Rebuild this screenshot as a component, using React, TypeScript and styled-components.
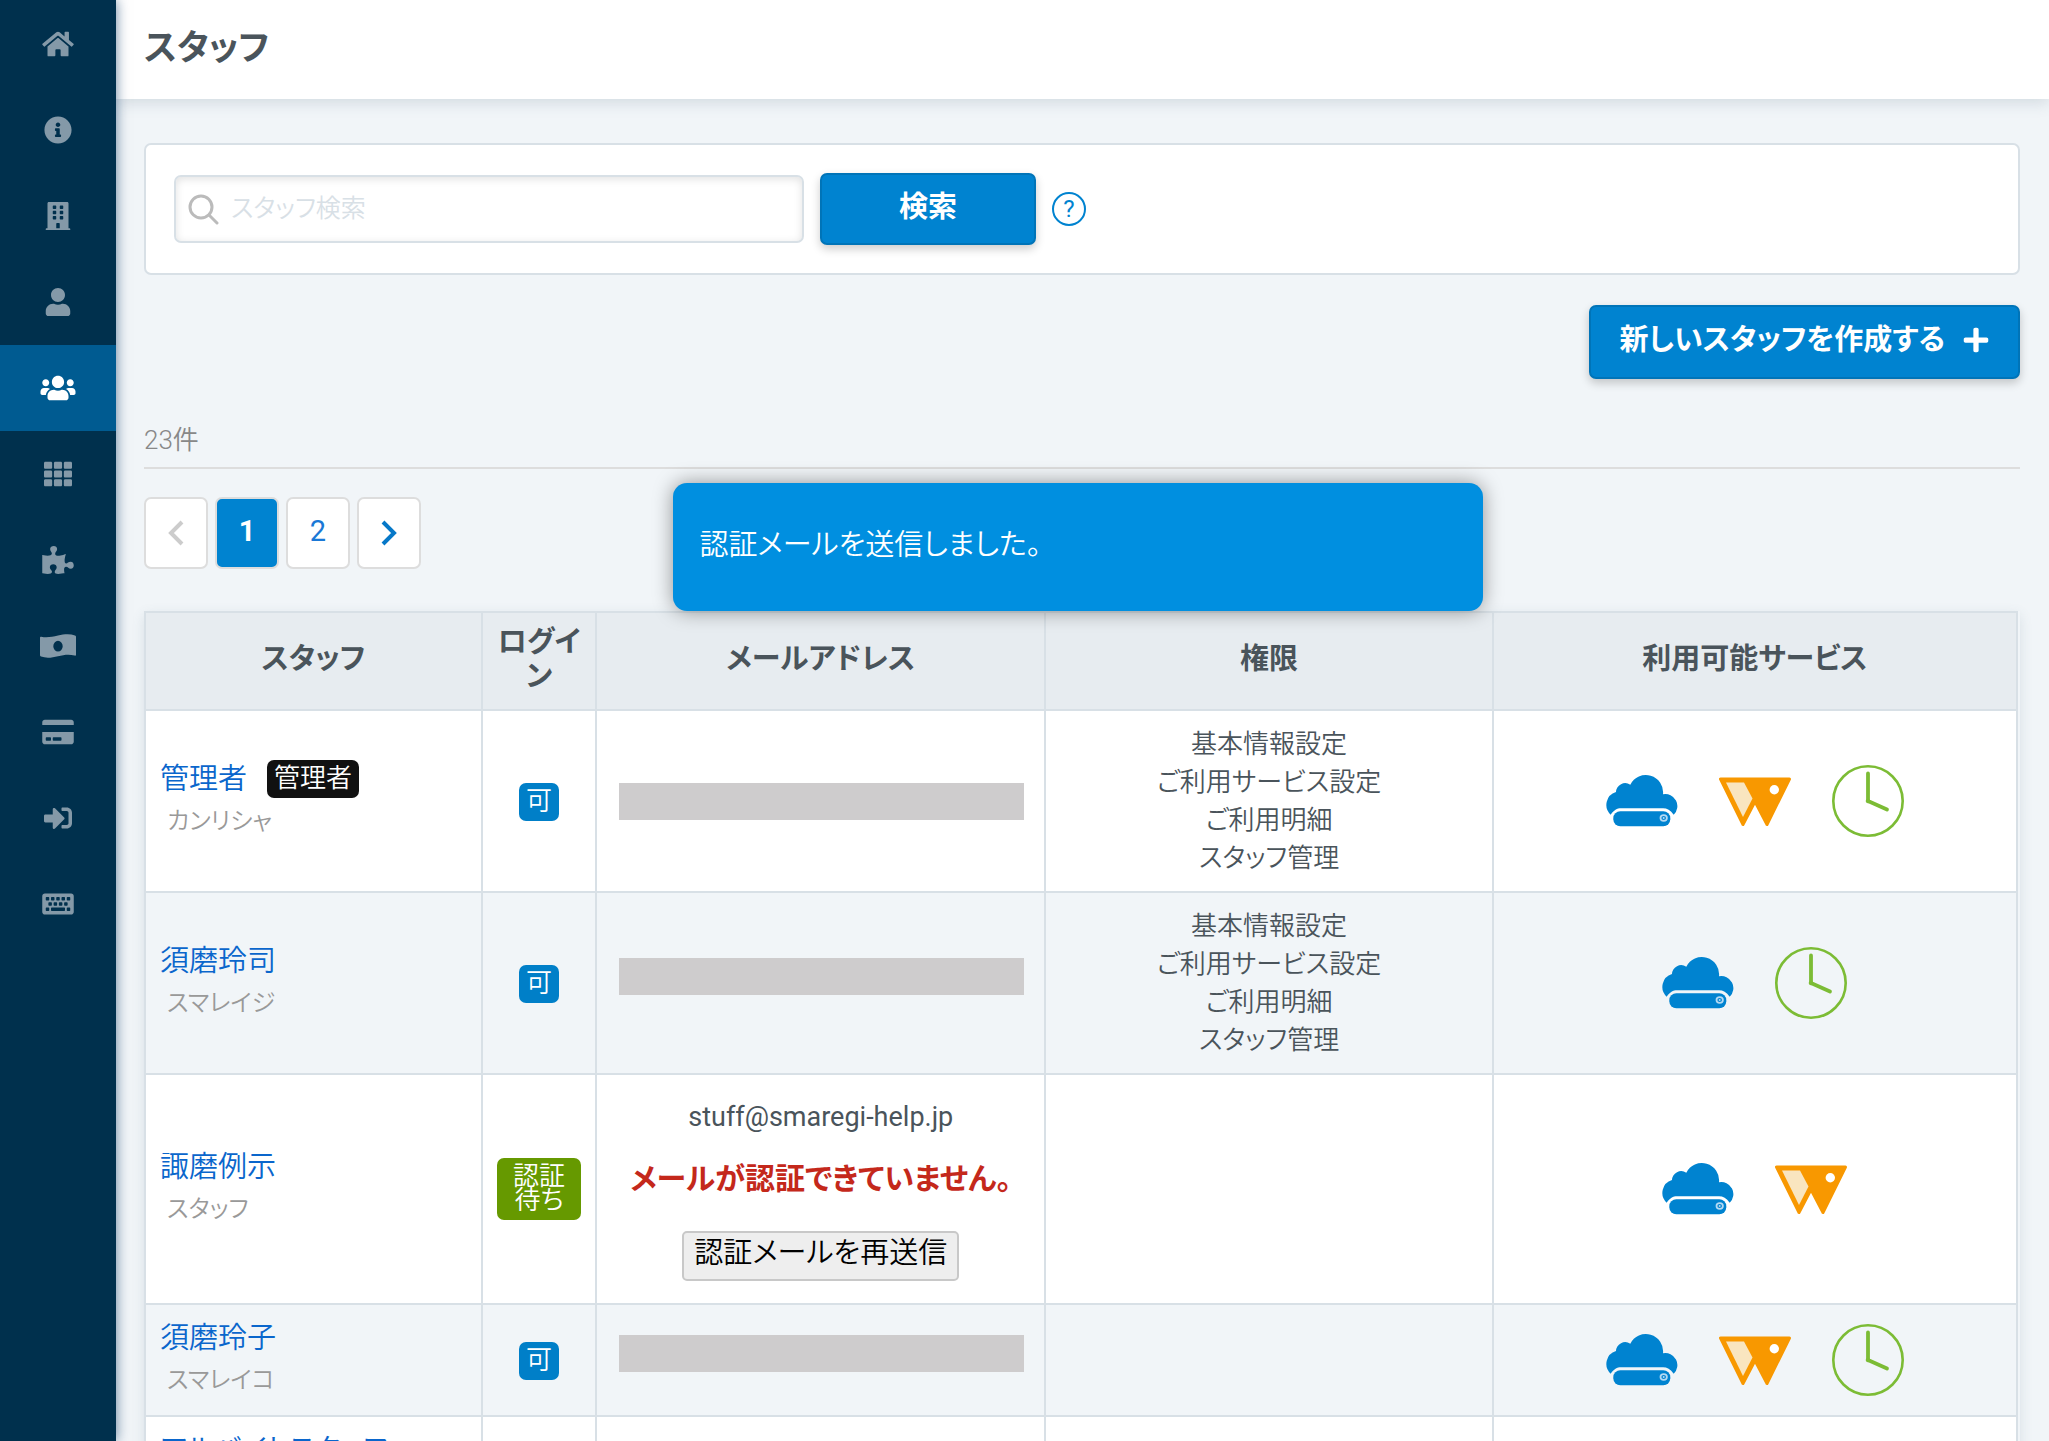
import React from "react";
import styled, { createGlobalStyle, css } from "styled-components";
import {
  FaBuilding,
  FaCreditCard,
  FaHome,
  FaInfoCircle,
  FaKeyboard,
  FaPlus,
  FaPuzzlePiece,
  FaSignInAlt,
  FaTh,
  FaUser,
  FaUsers,
} from "react-icons/fa";

const color = {
  navy: "#00304d",
  navyActive: "#005b91",
  blue: "#0083d0",
  blueDark: "#0074b8",
  link: "#0a66cc",
  text: "#4a545b",
  muted: "#999999",
  line: "#d8e0e6",
  rule: "#dddddd",
  page: "#f1f5f8",
  head: "#e7ecf0",
};

const GlobalStyle = createGlobalStyle`
  *, *::before, *::after { box-sizing: border-box; }
  body {
    margin: 0;
    background: ${color.page};
    color: ${color.text};
    font-family: Roboto, "Noto Sans CJK JP", sans-serif;
    font-size: 26px;
    line-height: 38px;
    font-feature-settings: "palt";
  }
  button, input { font: inherit; font-feature-settings: inherit; }
  h1, p { margin: 0; padding: 0; }
  a { text-decoration: none; }
`;

const Shell = styled.div`
  display: flex;
  height: 100vh;
  overflow: hidden;
`;

const Sidebar = styled.nav`
  flex: none;
  width: 116px;
  padding-top: 1px;
  background: ${color.navy};
  box-shadow: 0 0 12px rgba(0, 48, 96, 0.6);
  z-index: 2;
`;

const NavLink = styled.a<{ $active?: boolean }>`
  display: flex;
  align-items: center;
  justify-content: center;
  height: 86px;
  color: ${(p) => (p.$active ? "#ffffff" : "#8499a8")};
  background: ${(p) => (p.$active ? color.navyActive : "transparent")};

  svg {
    width: 36px;
    height: 28px;
  }
`;

const Main = styled.main`
  position: relative;
  flex: 1;
  min-width: 0;
  overflow-y: auto;
  scrollbar-width: none;
`;

const Header = styled.header`
  height: 99px;
  padding: 25px 28px;
  background: #ffffff;
  box-shadow: 0 4px 14px rgba(70, 100, 120, 0.18);
`;

const Title = styled.h1`
  font-size: 35px;
  line-height: 48px;
  font-weight: 700;
`;

const Content = styled.div`
  padding: 44px 29px 0 28px;
`;

const SearchCard = styled.form`
  display: flex;
  align-items: center;
  height: 132px;
  padding: 0 28px;
  gap: 16px;
  background: #ffffff;
  border: 2px solid ${color.line};
  border-radius: 7px;
`;

const SearchBox = styled.label`
  display: flex;
  align-items: center;
  gap: 12px;
  width: 630px;
  height: 68px;
  padding: 0 12px;
  border: 2px solid ${color.line};
  border-radius: 7px;
  box-shadow: inset 0 2px 8px rgba(0, 0, 0, 0.12);
`;

const SearchInput = styled.input`
  flex: 1;
  min-width: 0;
  height: 56px;
  padding: 0 0 2px;
  border: 0;
  outline: 0;
  background: transparent;
  color: ${color.text};
  font-size: 25px;
  font-weight: 350;

  &::placeholder {
    color: ${color.line};
    opacity: 1;
  }
`;

const primary = css`
  border: 2px solid ${color.blueDark};
  border-radius: 7px;
  background: ${color.blue};
  color: #ffffff;
  font-size: 29px;
  line-height: 40px;
  font-weight: 700;
  box-shadow: 0 4px 10px rgba(0, 0, 0, 0.2);
  cursor: pointer;
`;

const SearchButton = styled.button`
  ${primary}
  width: 216px;
  height: 72px;
  padding: 0 0 4px;
`;

const HelpButton = styled.button`
  width: 34px;
  height: 34px;
  padding: 0;
  border: 2px solid ${color.blue};
  border-radius: 50%;
  background: #ffffff;
  color: ${color.blue};
  font-size: 24px;
  line-height: 28px;
`;

const Actions = styled.div`
  display: flex;
  justify-content: flex-end;
  margin-top: 30px;
`;

const CreateButton = styled.button`
  ${primary}
  display: flex;
  align-items: center;
  gap: 18px;
  height: 74px;
  padding: 0 29px 4px;

  svg {
    width: 26px;
    height: 28px;
  }
`;

const Count = styled.p`
  margin-top: 42px;
  padding-bottom: 8px;
  border-bottom: 2px solid ${color.rule};
  color: #888888;
  font-weight: 350;
`;

const Pager = styled.nav`
  display: flex;
  gap: 7px;
  margin-top: 28px;
`;

const PageButton = styled.button<{ $current?: boolean }>`
  display: flex;
  align-items: center;
  justify-content: center;
  width: 64px;
  height: 72px;
  padding: 0 0 4px;
  border: 2px solid ${color.rule};
  border-radius: 7px;
  background: ${(p) => (p.$current ? color.blue : "#ffffff")};
  color: ${(p) => (p.$current ? "#ffffff" : "#1a78d6")};
  font-size: 29px;
  font-weight: ${(p) => (p.$current ? 700 : 400)};

  svg {
    margin-top: 4px;
  }
`;

const TableFrame = styled.div`
  margin-top: 42px;
  padding-right: 2px;
  box-shadow: 0 4px 12px rgba(70, 100, 120, 0.14);
`;

const Table = styled.table`
  width: 100%;
  table-layout: fixed;
  border-collapse: collapse;
`;

const Col = styled.col<{ $width: string }>`
  width: ${(p) => p.$width};
`;

const Th = styled.th`
  height: 98px;
  padding: 0 14px 4px;
  border: 2px solid ${color.line};
  background: ${color.head};
  font-size: 29px;
  line-height: 34px;
  font-weight: 700;
  word-break: break-all;
`;

const Row = styled.tr`
  background: #ffffff;

  &:nth-child(even) {
    background: ${color.page};
  }
`;

const Td = styled.td<{ $left?: boolean }>`
  padding: 14px;
  border: 2px solid ${color.line};
  text-align: ${(p) => (p.$left ? "left" : "center")};
  font-weight: 350;
`;

const NameLine = styled.div`
  display: flex;
  align-items: center;
  gap: 20px;
  font-size: 29px;
  line-height: 38px;
`;

const StaffLink = styled.a`
  color: ${color.link};
`;

const Kana = styled.div`
  margin-top: 2px;
  padding-left: 7px;
  color: ${color.muted};
  font-size: 24px;
  line-height: 42px;
`;

const Tag = styled.span<{ $tone: "black" | "blue" | "green" }>`
  display: inline-block;
  padding: 6px 7px 8px;
  border-radius: 7px;
  background: ${(p) => ({ black: "#111111", blue: "#007fc8", green: "#669900" })[p.$tone]};
  color: #ffffff;
  font-size: 26px;
  line-height: 24px;
  vertical-align: middle;
`;

const Redacted = styled.div<{ $raised?: boolean }>`
  height: 37px;
  margin: 0 6px ${(p) => (p.$raised ? 14 : 0)}px 8px;
  background: #cecccd;
`;

const MailBlock = styled.div`
  display: flex;
  flex-direction: column;
  align-items: center;
  padding: 9px 0 8px;
  font-weight: 400;
`;

const MailAddress = styled.p`
  font-size: 27px;
`;

const MailWarning = styled.p`
  margin: 21px 0 30px;
  color: #c4281b;
  font-size: 30px;
  line-height: 44px;
  font-weight: 700;
  white-space: nowrap;
`;

const ResendButton = styled.button`
  height: 50px;
  padding: 0 10px 6px;
  border: 2px solid #c8c8c8;
  border-radius: 5px;
  background: #eeeeee;
  color: #000000;
  font-size: 29px;
  font-weight: 350;
  line-height: 40px;
  white-space: nowrap;
`;

const Services = styled.div`
  display: flex;
  justify-content: center;
  gap: 41px;
`;

const Toast = styled.div`
  position: absolute;
  top: 483px;
  left: calc(50% - 410px);
  width: 810px;
  padding: 42px 27px 46px;
  border-radius: 14px;
  background: #008fe0;
  color: #ffffff;
  font-size: 29px;
  line-height: 40px;
  font-weight: 350;
  box-shadow: 0 0 20px rgba(0, 0, 0, 0.4);
`;

const BanknoteIcon = () => (
  <svg viewBox="0 0 36 28" fill="currentColor">
    <path
      fillRule="evenodd"
      d="M1.2 4.7C6 6 12 5 18 3.600C24 2 30 1.600 35 3.400Q36 3.800 36 4.800V22.500Q36 24 34.600 23.600C29 22 24 22.800 18 24.200C12 25.800 6 26.400 1 24.600Q0 24.200 0 23.200V5.700Q0 4.400 1.200 4.700ZM18 8.800A4.700 5.400 0 1 0 18 19.600A4.700 5.400 0 1 0 18 8.800Z"
    />
  </svg>
);

const SearchIcon = () => (
  <svg width="31" height="31" viewBox="0 0 31 31" fill="none" stroke="#bbbbbb" strokeWidth="3">
    <circle cx="13" cy="13" r="11" />
    <path d="M21 21L29 29" strokeLinecap="round" />
  </svg>
);

const Chevron = ({ to, stroke }: { to: "left" | "right"; stroke: string }) => (
  <svg width="16" height="26" viewBox="0 0 16 26" fill="none" stroke={stroke} strokeWidth="4">
    <path d={to === "left" ? "M14 2L3 13L14 24" : "M2 2L13 13L2 24"} />
  </svg>
);

const CloudIcon = () => (
  <svg width="72" height="72" viewBox="0 0 72 72" role="img" aria-label="cloud">
    <path
      fill="#0083d0"
      d="M4.7 49.7A13.4 13.4 0 0 1 10 27A9.2 9.2 0 0 1 24.3 19.7A17.3 17.3 0 0 1 57 29.3A12 12 0 0 1 67.7 49.7C64.5 45.2 61 43.3 57 43.3H15C11 43.3 7.8 45.2 4.7 49.7Z"
    />
    <rect x="7.3" y="46.3" width="57" height="15" rx="7" fill="#0083d0" />
    <ellipse cx="57.7" cy="53" rx="3.2" ry="2.8" fill="none" stroke="#b3d9f3" strokeWidth="1.8" />
    <circle cx="57.7" cy="53" r="1" fill="#b3d9f3" />
  </svg>
);

const WaiterIcon = () => (
  <svg width="72" height="72" viewBox="0 0 72 72" role="img" aria-label="waiter">
    <path
      fill="#f89800"
      stroke="#f89800"
      strokeWidth="3"
      strokeLinejoin="round"
      d="M1.5 14H70.5L48 59.5L36 36.5L24 59.5Z"
    />
    <path fill="#f9e5bf" d="M7 17.5H25L33.5 33.5L24 52Z" />
    <circle cx="55.3" cy="24.7" r="4.7" fill="#ffffff" />
  </svg>
);

const ClockIcon = () => (
  <svg width="72" height="72" viewBox="0 0 72 72" fill="none" stroke="#7cbc35" role="img" aria-label="timecard">
    <circle cx="36" cy="36" r="34.7" strokeWidth="2.6" />
    <path d="M36 8.5V36L55 44.5" strokeWidth="3.8" strokeLinecap="round" strokeLinejoin="round" />
    <circle cx="36" cy="36" r="1.8" fill="#7cbc35" />
  </svg>
);

type Service = "cloud" | "waiter" | "clock";
const serviceIcon: Record<Service, React.FC> = {
  cloud: CloudIcon,
  waiter: WaiterIcon,
  clock: ClockIcon,
};

const navItems = [
  { label: "ホーム", Icon: FaHome },
  { label: "お知らせ", Icon: FaInfoCircle },
  { label: "会社", Icon: FaBuilding },
  { label: "アカウント", Icon: FaUser },
  { label: "スタッフ", Icon: FaUsers, active: true },
  { label: "サービス", Icon: FaTh },
  { label: "アプリ", Icon: FaPuzzlePiece },
  { label: "ご利用明細", Icon: BanknoteIcon },
  { label: "お支払い", Icon: FaCreditCard },
  { label: "ログイン", Icon: FaSignInAlt },
  { label: "キーボード", Icon: FaKeyboard },
];

const allPermissions = ["基本情報設定", "ご利用サービス設定", "ご利用明細", "スタッフ管理"];

interface Staff {
  name: string;
  kana?: string;
  admin?: boolean;
  login?: "ok" | "pending";
  mail?: string;
  raised?: boolean;
  permissions: string[];
  services: Service[];
}

const staff: Staff[] = [
  { name: "管理者", kana: "カンリシャ", admin: true, login: "ok", permissions: allPermissions, services: ["cloud", "waiter", "clock"] },
  { name: "須磨玲司", kana: "スマレイジ", login: "ok", raised: true, permissions: allPermissions, services: ["cloud", "clock"] },
  { name: "諏磨例示", kana: "スタッフ", login: "pending", mail: "stuff@smaregi-help.jp", permissions: [], services: ["cloud", "waiter"] },
  { name: "須磨玲子", kana: "スマレイコ", login: "ok", raised: true, permissions: [], services: ["cloud", "waiter", "clock"] },
  { name: "アルバイトスタッフ", permissions: [], services: [] },
];

const StaffRow = ({ person }: { person: Staff }) => (
  <Row>
    <Td $left>
      <NameLine>
        <StaffLink href="#staff">{person.name}</StaffLink>
        {person.admin && <Tag $tone="black">管理者</Tag>}
      </NameLine>
      {person.kana && <Kana>{person.kana}</Kana>}
    </Td>
    <Td>
      {person.login === "ok" && <Tag $tone="blue">可</Tag>}
      {person.login === "pending" && <Tag $tone="green">認証待ち</Tag>}
    </Td>
    <Td>
      {person.login === "ok" && <Redacted $raised={person.raised} />}
      {person.mail && (
        <MailBlock>
          <MailAddress>{person.mail}</MailAddress>
          <MailWarning>メールが認証できていません。</MailWarning>
          <ResendButton type="button">認証メールを再送信</ResendButton>
        </MailBlock>
      )}
    </Td>
    <Td>
      {person.permissions.map((permission) => (
        <p key={permission}>{permission}</p>
      ))}
    </Td>
    <Td>
      <Services>
        {person.services.map((service) => {
          const Icon = serviceIcon[service];
          return <Icon key={service} />;
        })}
      </Services>
    </Td>
  </Row>
);

export default function App() {
  return (
    <>
      <GlobalStyle />
      <Shell>
        <Sidebar>
          {navItems.map(({ label, Icon, active }) => (
            <NavLink key={label} href="#nav" aria-label={label} $active={active}>
              <Icon />
            </NavLink>
          ))}
        </Sidebar>
        <Main>
          <Header>
            <Title>スタッフ</Title>
          </Header>
          <Content>
            <SearchCard onSubmit={(event) => event.preventDefault()}>
              <SearchBox>
                <SearchIcon />
                <SearchInput type="text" placeholder="スタッフ検索" aria-label="スタッフ検索" />
              </SearchBox>
              <SearchButton type="submit">検索</SearchButton>
              <HelpButton type="button">?</HelpButton>
            </SearchCard>
            <Actions>
              <CreateButton type="button">
                新しいスタッフを作成する
                <FaPlus />
              </CreateButton>
            </Actions>
            <Count>23件</Count>
            <Pager>
              <PageButton type="button" disabled aria-label="前へ">
                <Chevron to="left" stroke="#cccccc" />
              </PageButton>
              <PageButton type="button" $current>
                1
              </PageButton>
              <PageButton type="button">2</PageButton>
              <PageButton type="button" aria-label="次へ">
                <Chevron to="right" stroke="#0678c8" />
              </PageButton>
            </Pager>
            <TableFrame>
              <Table>
                <colgroup>
                  <Col $width="18%" />
                  <Col $width="6.1%" />
                  <Col $width="24%" />
                  <Col $width="23.9%" />
                  <Col $width="auto" />
                </colgroup>
                <thead>
                  <tr>
                    <Th>スタッフ</Th>
                    <Th>ログイン</Th>
                    <Th>メールアドレス</Th>
                    <Th>権限</Th>
                    <Th>利用可能サービス</Th>
                  </tr>
                </thead>
                <tbody>
                  {staff.map((person) => (
                    <StaffRow key={person.name} person={person} />
                  ))}
                </tbody>
              </Table>
            </TableFrame>
          </Content>
          <Toast role="status">認証メールを送信しました。</Toast>
        </Main>
      </Shell>
    </>
  );
}
